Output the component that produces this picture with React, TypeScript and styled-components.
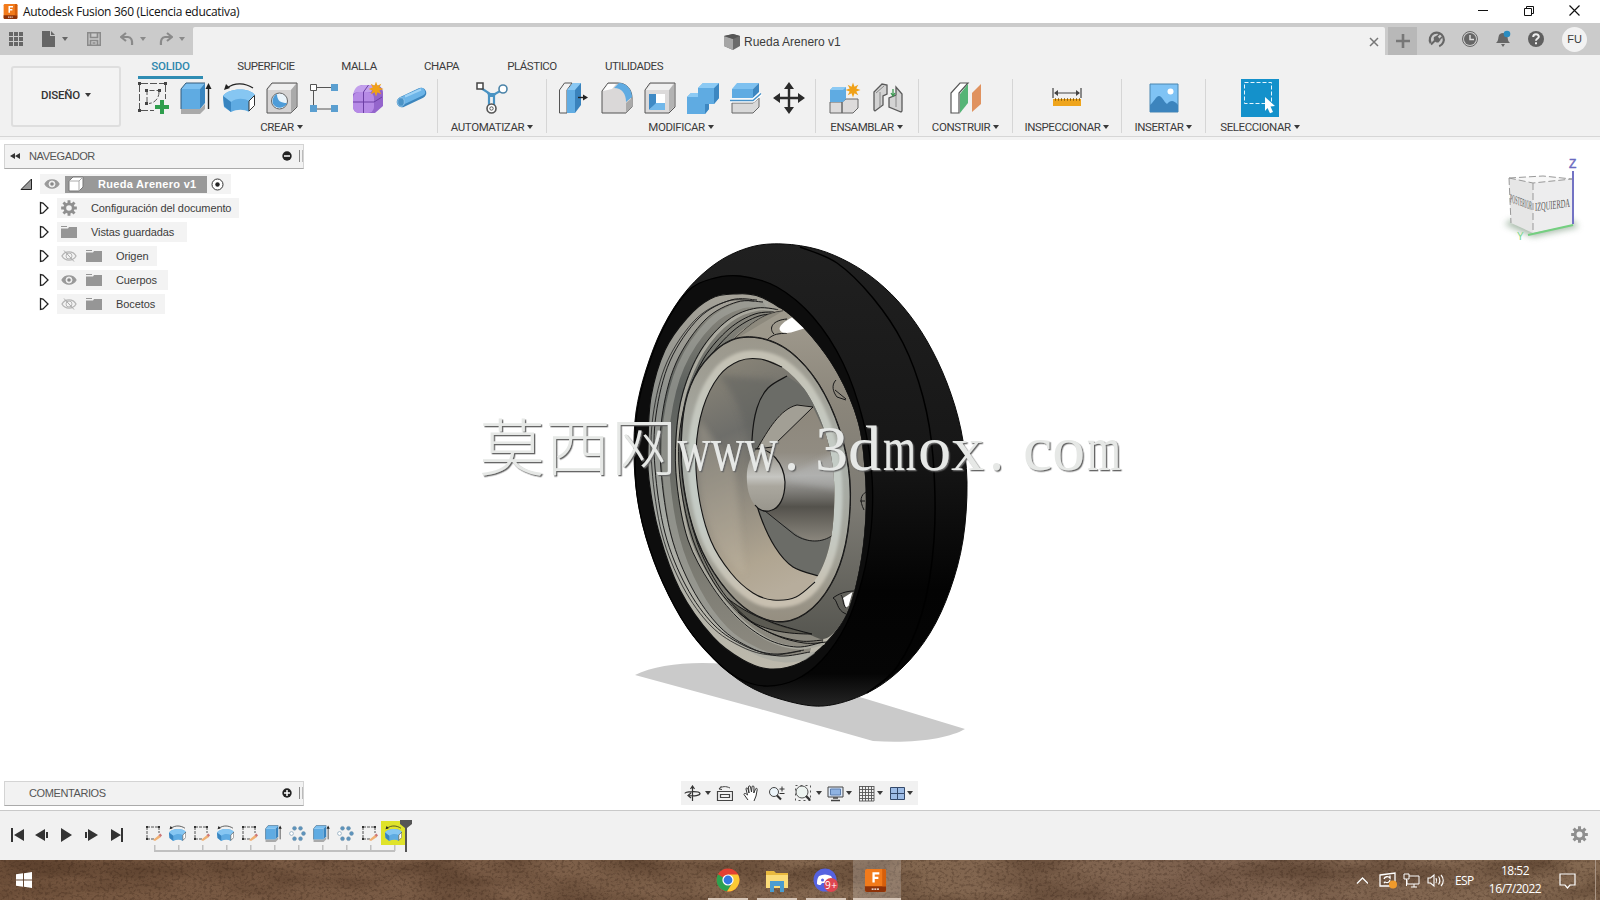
import React, { FC, ReactNode } from 'react';
import styled, { createGlobalStyle } from 'styled-components';

const GlobalStyle = createGlobalStyle`
  * {
    box-sizing: border-box;
  }
  body {
    margin: 0;
    overflow: hidden;
    background: #fff;
    font-family: 'Liberation Sans', Arial, sans-serif;
    color: #3c3c3c;
  }
  svg {
    display: block;
    flex: none;
  }
`;

const Window = styled.div`
  width: 1600px;
  height: 900px;
  display: flex;
  flex-direction: column;
  overflow: hidden;
`;

/* ---------- title bar ---------- */

const TitleBar = styled.header`
  height: 23px;
  flex: none;
  display: flex;
  align-items: center;
  padding: 0 18px 0 3px;
  background: #fff;
`;

const WindowTitle = styled.span`
  font-family: 'Open Sans', sans-serif;
  font-size: 12px;
  letter-spacing: -0.29px;
  color: #111;
  margin-left: 5px;
  flex: 1;
  white-space: nowrap;
`;

const WindowButtons = styled.div`
  display: flex;
  gap: 31px;
  padding-bottom: 3px;
`;

/* ---------- document strip ---------- */

const DocStrip = styled.div`
  height: 32px;
  flex: none;
  display: flex;
  align-items: flex-end;
  background: #cbcbcb;
`;

const QuickAccess = styled.div`
  width: 193px;
  height: 32px;
  display: flex;
  align-items: center;
  padding-left: 9px;
`;

const Slot = styled.div<{ $w: number; $dim?: boolean }>`
  width: ${({ $w }) => $w}px;
  flex: none;
  opacity: ${({ $dim }) => ($dim ? 0.55 : 1)};
`;

const DocTab = styled.div`
  width: 1192px;
  height: 28px;
  display: flex;
  align-items: center;
  padding: 1px 5px 0 531px;
  background: #f1f1f1;
  border-radius: 2px 2px 0 0;
  font-size: 12px;
`;

const DocName = styled.span`
  flex: 1;
  margin-left: 4px;
`;

const AddTab = styled.div`
  width: 29px;
  height: 28px;
  margin: 0 11px 0 3px;
  background: #b8b8b8;
  display: flex;
  align-items: center;
  justify-content: center;
`;

const AccountIcons = styled.div`
  height: 32px;
  display: flex;
  align-items: center;
  gap: 15px;
`;

const Avatar = styled.div`
  width: 25px;
  height: 25px;
  margin-left: 2px;
  border-radius: 50%;
  background: #f2f2f2;
  font-size: 11px;
  display: flex;
  align-items: center;
  justify-content: center;
`;

/* ---------- ribbon ---------- */

const Ribbon = styled.section`
  height: 85px;
  flex: none;
  display: flex;
  background: #f1f1f1;
  border-bottom: 3px solid #f3f3f3;
  box-shadow: inset 0 -1px 0 #d6d6d6;
  font-family: Roboto, sans-serif;
  font-size: 11.5px;
`;

const WorkspaceButton = styled.button`
  width: 110px;
  height: 61px;
  margin: 11px 0 0 11px;
  border: 2px solid #dedede;
  border-radius: 3px;
  background: #f3f3f3;
  font: 500 11.5px Roboto, sans-serif;
  letter-spacing: -0.2px;
  color: #333;
  display: flex;
  align-items: center;
  justify-content: center;
  gap: 5px;
  padding: 0 0 4px;
`;

const RibbonMain = styled.div`
  flex: 1;
  margin-left: 9px;
`;

const RibbonTabs = styled.nav`
  height: 24px;
  display: flex;
  padding-left: 8px;
`;

const RibbonTab = styled.div<{ $w: number; $active?: boolean }>`
  width: ${({ $w }) => $w}px;
  height: 24px;
  flex: none;
  text-align: center;
  line-height: 22px;
  letter-spacing: ${({ $active }) => ($active ? '-0.2px' : '-0.45px')};
  white-space: nowrap;
  font-weight: ${({ $active }) => ($active ? 500 : 400)};
  color: ${({ $active }) => ($active ? '#2f88ad' : '#3c3c3c')};
  border-bottom: 3px solid ${({ $active }) => ($active ? '#2f8db3' : 'transparent')};
`;

const Groups = styled.div`
  display: flex;
`;

const Group = styled.div<{ $w: number; $shift?: number; $last?: boolean }>`
  width: ${({ $w }) => $w}px;
  height: 54px;
  display: flex;
  flex-direction: column;
  align-items: center;
  padding-right: ${({ $shift }) => $shift || 0}px;
  border-right: 1px solid ${({ $last }) => ($last ? 'transparent' : '#d6d6d6')};
`;

const GroupIcons = styled.div`
  height: 38px;
  flex: none;
  display: flex;
  align-items: center;
  justify-content: center;
  gap: 11px;
`;

const GroupLabel = styled.div`
  display: flex;
  align-items: center;
  gap: 3px;
  padding-top: 2px;
  line-height: 16px;
  letter-spacing: -0.42px;
  white-space: nowrap;
`;

/* ---------- viewport ---------- */

const Viewport = styled.main`
  position: relative;
  height: 671px;
  flex: none;
  display: flex;
  flex-direction: column;
  padding: 4px 0 4px 4px;
  background: #fff;
  border-bottom: 1px solid #c9c9c9;
`;

const Scene = styled.svg`
  position: absolute;
  left: 0;
  top: 0;
`;

const PanelBar = styled.div`
  width: 300px;
  height: 25px;
  display: flex;
  align-items: center;
  padding: 0 0 1px 4px;
  border: 1px solid #d4d4d4;
  border-bottom: 1px solid #aaa;
  background: #f2f2f2;
  font-size: 11px;
  letter-spacing: -0.4px;
  color: #555;
`;

const PanelTitle = styled.span`
  flex: 1;
  margin-left: 8px;
`;

const PanelGrip = styled.i`
  width: 4px;
  height: 12px;
  margin-left: 7px;
  border-left: 1px solid #888;
  border-right: 1px solid #bbb;
`;

const Tree = styled.div`
  flex: 1;
  padding-top: 3px;
`;

const TreeRow = styled.div<{ $root?: boolean }>`
  height: 24px;
  display: flex;
  align-items: center;
  padding-left: ${({ $root }) => ($root ? 16 : 35)}px;
`;

const TreeItem = styled.div<{ $w: number }>`
  width: ${({ $w }) => $w}px;
  height: 20px;
  margin-left: 8px;
  padding-left: 4px;
  display: flex;
  align-items: center;
  gap: 9px;
  background: #f3f3f3;
  font-size: 11px;
  letter-spacing: -0.1px;
  white-space: nowrap;
`;

const TreeLabel = styled.span`
  margin-left: 5px;
`;

const RootName = styled.div`
  width: 142px;
  height: 17px;
  margin: 0 -5px 0 -4px;
  padding-left: 3px;
  display: flex;
  align-items: center;
  gap: 14px;
  background: #999;
  color: #fff;
  font-weight: bold;
  font-size: 11px;
  letter-spacing: 0.3px;
`;

const BottomBars = styled.div`
  position: relative;
  height: 25px;
  display: flex;
`;

const ViewTools = styled.div`
  height: 24px;
  margin-left: 377px;
  padding: 0 5px 0 3px;
  display: flex;
  align-items: center;
  background: #f1f1f1;
`;

/* ---------- timeline ---------- */

const Timeline = styled.footer`
  height: 49px;
  flex: none;
  display: flex;
  background: #f1f1f1;
  padding: 0 12px 0 9px;
`;

const Transport = styled.div`
  width: 132px;
  height: 48px;
  display: flex;
  align-items: center;
  gap: 9px;
`;

const Track = styled.div`
  position: relative;
  display: flex;
  height: 41px;
  padding-top: 10px;
`;

const Feature = styled.div<{ $active?: boolean }>`
  width: 24px;
  height: 24px;
  display: flex;
  align-items: center;
  justify-content: center;
  background: ${({ $active }) => ($active ? '#dfe32b' : 'none')};
`;

const Ruler = styled.svg`
  position: absolute;
  left: 1px;
  top: 8px;
`;

const TimelineSettings = styled.div`
  margin: 15px 0 0 auto;
`;

/* ---------- taskbar ---------- */

const TaskBar = styled.div`
  position: relative;
  height: 40px;
  flex: none;
  display: flex;
  background: linear-gradient(90deg, #75563f, #7b5d47 30%, #83674f 55%, #7f6350 75%, #846951);
  font-family: 'Open Sans', sans-serif;
  color: #fff;
`;

const Grain = styled.svg`
  position: absolute;
  left: 0;
  top: 0;
`;

const StartButton = styled.div`
  position: relative;
  width: 706px;
  padding: 12px 0 0 16px;
`;

const TaskApp = styled.div<{ $active?: boolean }>`
  position: relative;
  width: ${({ $active }) => ($active ? 48 : 49)}px;
  display: flex;
  align-items: center;
  justify-content: center;
  padding-right: ${({ $active }) => ($active ? 3 : 6)}px;
  background: ${({ $active }) => ($active ? 'rgba(255, 255, 255, 0.2)' : 'none')};
  &::after {
    content: '';
    position: absolute;
    left: ${({ $active }) => ($active ? 0 : 2)}px;
    right: ${({ $active }) => ($active ? 0 : 7)}px;
    bottom: 0;
    height: 2px;
    background: #d8c8ba;
  }
`;

const Tray = styled.div`
  position: relative;
  margin-left: auto;
  display: flex;
  align-items: center;
  border-right: 1px solid #a89484;
  margin-right: 4px;
`;

const Lang = styled.span`
  width: 50px;
  padding-left: 11px;
  font-size: 12px;
  letter-spacing: -0.6px;
`;

const Clock = styled.div`
  width: 60px;
  margin: 0 14px 0 -9px;
  text-align: center;
  font-size: 12px;
  line-height: 18px;
  letter-spacing: -0.5px;
`;

/* ---------- icons ---------- */

const Icon: FC<{ w: number; h?: number; box?: string; children: ReactNode }> = ({ w, h, box, children }) => (
  <svg width={w} height={h || w} viewBox={box || `0 0 ${w} ${h || w}`} fill="none">
    {children}
  </svg>
);

const Caret: FC<{ color?: string }> = ({ color = '#3a3a3a' }) => (
  <Icon w={6} h={4}>
    <path d="M0 0h6L3 4z" fill={color} />
  </Icon>
);

const FusionLogo: FC<{ size: number }> = ({ size }) => (
  <Icon w={size} box="0 0 24 24">
    <rect x="1" y="0" width="22" height="24" rx="2" fill="#f27a1a" />
    <path d="M1 18h22v4a2 2 0 0 1-2 2H3a2 2 0 0 1-2-2z" fill="#8e3208" />
    <path d="M19 0h2a2 2 0 0 1 2 2v16h-4z" fill="#d65f0b" />
    <path d="M10 14V4.500h6M10 9.300h5" stroke="#fff" strokeWidth="2.400" />
    <path d="M8 21h8" stroke="#fff" strokeWidth="1.500" strokeDasharray="2 .8" />
  </Icon>
);

const Star = ({ x, y }: { x: number; y: number }) => (
  <path
    transform={`translate(${x} ${y})`}
    d="M0-7.500 1.500-3.200 5.300-5.300 3.300-1.500 7.500 0 3.300 1.500 5.300 5.300 1.500 3.200 0 7.500-1.500 3.200-5.300 5.300-3.300 1.500-7.500 0-3.300-1.500-5.300-5.300-1.500-3.200z"
    fill="#f0a117"
  />
);

const SketchIcon = () => (
  <Icon w={32}>
    <path d="M4 1.500h24M2.500 3v24M28.500 3v14M4 28.500h13" stroke="#555" strokeDasharray="7 2" />
    <path d="M10 20V8.500h12M22 10c0 6-4 11-10 11.500" stroke="#555" strokeDasharray="5 2" />
    <path d="M1 0h3v3H1zM27 0h3v3h-3zM1 27h3v3H1zM8 7h3v3H8zM21 7h3v3h-3zM8 20h3v3H8z" fill="#444" />
    <path d="M23 18h4v5h5v4h-5v5h-4v-5h-5v-4h5z" fill="#2f9e4d" />
  </Icon>
);

const ExtrudeIcon: FC<{ size?: number }> = ({ size = 32 }) => (
  <Icon w={size} box="0 0 32 32">
    <path d="M1 27h19l5-5v5l-5 5H1z" fill="#aaa" />
    <path d="M1 7h19v20H1z" fill="#5fabe2" />
    <path d="M1 7 6 1h19l-5 6z" fill="#7cc0f0" />
    <path d="M20 7l5-6v20l-5 6z" fill="#3985c0" />
    <path d="M1 27V7l5-6h19" stroke="#345b7a" />
    <path d="M28.500 27V4" stroke="#222" strokeWidth="1.400" />
    <path d="M25.500 7l3-6 3 6z" fill="#222" />
  </Icon>
);

const RevolveIcon: FC<{ size?: number }> = ({ size = 32 }) => (
  <Icon w={size} box="0 0 32 32">
    <path d="M0 14c5-8 26-9 32-1l-6 6v11c-5-3-12-3-18 0l-7-5z" fill="#5fabe2" />
    <path d="M0 14c5-8 26-9 32-1l-6 6c-5-3-13-3-18 1z" fill="#86c6f2" />
    <path d="M8 20v10l-7-6-1-10z" fill="#3985c0" />
    <path d="M26 19l5.500-5.500v10L26 29z" fill="#fff" stroke="#333" />
    <path d="M4 6C12 0 22 1 30 6" stroke="#222" strokeWidth="1.300" />
    <path d="M1 8l2-6 4 4z" fill="#222" />
  </Icon>
);

const HoleIcon = () => (
  <Icon w={32}>
    <path d="M1 7 6 1h25v24l-6 6H1z" fill="#d5d3d3" stroke="#555" />
    <path d="M2 8 6.500 2H30l-5 6z" fill="#efefef" />
    <path d="M25 8l5-6v23l-5 6z" fill="#aaa" />
    <circle cx="13.500" cy="19" r="8" fill="#eaf4fb" stroke="#666" />
    <path d="M11 12c0 7 4 9 10 9a8 8 0 0 1-14 1c-1-4 0-8 4-10z" fill="#4e9cd8" />
  </Icon>
);

const PatternIcon = () => (
  <Icon w={32}>
    <path d="M8 5.500h14M4.500 9v15M8 27h14" stroke="#555" />
    <path d="M1.500 2.500h6v6h-6z" fill="#fff" stroke="#555" />
    <path d="M22 2h7v7h-7zM1 23h7v7H1zM22 23h7v7h-7z" fill="#5b9fd0" />
  </Icon>
);

const FormIcon = () => (
  <Icon w={32}>
    <path d="M1 12 9 3h14c5 0 8 3 8 8v13l-8 7H8c-5 0-7-3-7-7z" fill="#9465cc" />
    <rect x="1" y="10" width="21" height="21" rx="6" fill="#b68ae6" />
    <path d="M1 12C3 6 5 3 11 3h12l-4 7H7c-3 0-5 1-6 2z" fill="#c3a0ec" />
    <path d="M11.500 10v21M1 20h21l8-5M11.500 10l5-7" stroke="#6c3fa5" />
    <Star x={24} y={7} />
  </Icon>
);

const PipeIcon = () => (
  <Icon w={32}>
    <path d="M7 20 26 11" stroke="#3d86bd" strokeWidth="10.500" strokeLinecap="round" />
    <path d="M7 19 26 10" stroke="#6db5e8" strokeWidth="8" strokeLinecap="round" />
    <path d="M10 14.500l16-7" stroke="#9fd3f6" strokeWidth="2" />
    <ellipse cx="6" cy="20" rx="3.300" ry="4.300" fill="#4b93c6" stroke="#8fc4ea" />
  </Icon>
);

const AutomateIcon = () => (
  <Icon w={32}>
    <path d="M5 6l9 6h5l7-4M13 12v12M18 12v12" stroke="#4a93c3" strokeWidth="2.200" />
    <path d="M11 11h10l-3 4h-5z" fill="#4a93c3" />
    <path d="M1 1h6v6H1z" fill="#fff" stroke="#444" strokeWidth="1.500" />
    <circle cx="27" cy="7" r="4" fill="#fff" stroke="#4a83a8" strokeWidth="1.600" />
    <circle cx="15.500" cy="26.500" r="4.500" fill="#fff" stroke="#555" strokeWidth="1.600" />
    <circle cx="15.500" cy="26.500" r="1.700" stroke="#555" />
  </Icon>
);

const PressPullIcon = () => (
  <Icon w={32}>
    <path d="M1.500 31V8l5-7H14l-5 7v23z" fill="#f2f2f2" stroke="#555" />
    <path d="M9 31V8l6-7h8v22l-6 8z" fill="#3a83bd" />
    <path d="M9 8h8v23H9z" fill="#62ade3" />
    <path d="M9 8l6-7h8l-6 7z" fill="#8ac8f3" />
    <path d="M20 15.500h7" stroke="#222" strokeWidth="1.400" />
    <path d="M25 12.500l5 3-5 3z" fill="#222" />
  </Icon>
);

const FilletIcon = () => (
  <Icon w={32}>
    <path d="M1 31V9l6-8h10c9 0 14 7 14 15v9l-6 6z" fill="#dad8d8" stroke="#555" />
    <path d="M25 31V21l6-5v9z" fill="#aaa" />
    <path d="M13 6l5-5c8 0 13 7 13 14l-6 5C25 12 21 6 13 6z" fill="#5fabe2" />
    <path d="M2 9l5-7h8l-4 5z" fill="#fff" />
  </Icon>
);

const ShellIcon = () => (
  <Icon w={32}>
    <path d="M1 8 6 1h25v24l-6 6H1z" fill="#dcdada" stroke="#555" />
    <path d="M25 8l5-6v23l-5 5z" fill="#b3b3b3" />
    <path d="M2 8l5-6h22l-4 6z" fill="#f0f0f0" />
    <path d="M5 12h16v16H5z" fill="#fff" />
    <path d="M5 12h7v10l-7 6z" fill="#3f8ac5" />
    <path d="M5 28l7-7h9v7z" fill="#72b8ea" />
  </Icon>
);

const CombineIcon = () => (
  <Icon w={32}>
    <path d="M0 15l4-4h7V6l5-5h16v15l-5 6h-5v5l-4 5H0z" fill="#5fabe2" />
    <path d="M27 6l5-5v15l-5 6h-5v5l-4 5V22h9z" fill="#3d87c1" />
    <path d="M0 15l4-4h7v4zM11 6l5-5h16l-5 5z" fill="#8ccaf4" />
  </Icon>
);

const SplitIcon = () => (
  <Icon w={32}>
    <path d="M2 21h21l6-5v9l-6 6H2z" fill="#d9d9d9" stroke="#666" />
    <path d="M2 7h21v9H2z" fill="#5fabe2" />
    <path d="M2 7l5-6h22l-6 6z" fill="#7ec1f0" />
    <path d="M23 7l6-6v9l-6 6z" fill="#3d87c1" />
    <path d="M0 18.500h23l8-7" stroke="#fff" strokeWidth="4" />
    <path d="M0 18.500h23l8-7" stroke="#4591c8" strokeWidth="1.400" />
  </Icon>
);

const MoveIcon = () => (
  <Icon w={32}>
    <path d="M16 5v22M5 16h22" stroke="#2b2b2b" strokeWidth="2.400" />
    <path d="M16 0l5 7H11zM16 32l5-7H11zM0 16l7-5v10zM32 16l-7-5v10z" fill="#2b2b2b" />
  </Icon>
);

const ComponentIcon = () => (
  <Icon w={32}>
    <path d="M1 20h12v11H1zM13 20l4-3h12v9l-5 5H13z" fill="#dddbdb" stroke="#666" />
    <path d="M1 8l3-3h13v12l-3 3H1z" fill="#5fabe2" />
    <path d="M1 8l3-3h13l-3 3z" fill="#8ccaf4" />
    <Star x={24} y={8} />
  </Icon>
);

const JointIcon = () => (
  <Icon w={32}>
    <path d="M2 10l8-8 5 1v9l-4 2v9l-8 6-1-1zM30 29V12l-6-7v8l-7 3v9l12 5z" fill="#d3d3d3" stroke="#5a5a5a" strokeWidth="1.300" />
    <path d="M4 11l8-7M8 10v15M24 14v11" stroke="#8a8a8a" />
    <path d="M21 7v6M19 11l2 3 2-3" stroke="#3d9a53" strokeWidth="1.300" />
  </Icon>
);

const PlaneIcon = () => (
  <Icon w={32}>
    <path d="M1 31V11l9-10h8L9 11v20z" fill="#fff" stroke="#555" strokeWidth="1.200" />
    <path d="M10 12l8-10v19l-8 10z" fill="#55b476" />
    <path d="M22 11l9-9v20l-9 8z" fill="#e0925f" />
  </Icon>
);

const MeasureIcon = () => (
  <Icon w={30} h={20}>
    <path d="M1 0v10M29 0v10M3 5h24" stroke="#444" strokeWidth="1.200" />
    <path d="M2 5l4-3v6zM28 5l-4-3v6z" fill="#444" />
    <path d="M1 11h28v7H1z" fill="#efa51c" />
    <path d="M3 11.500h25" stroke="#875c0c" strokeWidth="2.500" strokeDasharray="1 2" />
  </Icon>
);

const PictureIcon = () => (
  <Icon w={30}>
    <path d="M1 1h28v28H1z" fill="#7fc3f5" stroke="#4a86b0" />
    <path d="M1 22c4-3 6-9 9-9s5 6 8 8c3-3 6-5 11 1v7H1z" fill="#3c84bd" />
    <circle cx="21.500" cy="8.500" r="3" fill="#fff" />
  </Icon>
);

const SelectIcon = () => (
  <Icon w={38}>
    <path d="M0 0h38v38H0z" fill="#1491cb" />
    <path d="M3.500 3.500h27v21h-27z" stroke="#e8f6ff" strokeDasharray="4 2" />
    <path d="M24 18l10 9-4.500.5 2.500 5.500-3 1.300-2.500-5.300-2.500 3z" fill="#fff" />
  </Icon>
);

const GearIcon: FC<{ size: number; color?: string }> = ({ size, color = '#8f8f8f' }) => (
  <Icon w={size} box="-10 -10 20 20">
    {[0, 45, 90, 135].map((a) => (
      <path key={a} d="M-1.800-9.800h3.600v5h-3.600zM-1.800 4.800h3.600v5h-3.600z" fill={color} transform={`rotate(${a})`} />
    ))}
    <circle r="5.200" stroke={color} strokeWidth="3.400" />
  </Icon>
);

const EyeIcon: FC<{ off?: boolean }> = ({ off }) => (
  <Icon w={16}>
    <path d="M1 8c3-5.500 11-5.500 14 0-3 5.500-11 5.500-14 0z" stroke={off ? '#b5b5b5' : '#999'} fill={off ? 'none' : '#999'} strokeWidth="1.300" />
    <circle cx="8" cy="8" r="3" fill={off ? 'none' : '#eee'} stroke={off ? '#b5b5b5' : '#eee'} />
    {!off && <circle cx="8" cy="8" r="1.800" fill="#888" />}
    {off && <path d="M3 2.500l10 11" stroke="#aaa" />}
  </Icon>
);

const FolderIcon = () => (
  <Icon w={16}>
    <path d="M0 3V2h6v1H0zM0 4.500h7l1-1.500h8v11H0z" fill="#969696" />
  </Icon>
);

const ExpandIcon = () => (
  <Icon w={10} h={14}>
    <path d="M1.500 1.500v11L4 12l5-5-5-5z" stroke="#222" strokeWidth="1.300" fill="#fff" />
  </Icon>
);

const MiniSketch = () => (
  <Icon w={17}>
    <path d="M2 2h12M2 2v12M14 2v6M2 14h7" stroke="#555" strokeDasharray="3 1" />
    <path d="M1 1h2v2H1zM13 1h2v2h-2zM1 13h2v2H1z" fill="#333" />
    <path d="M8 15l6-5 2 2-6 4z" fill="#f0b073" />
    <path d="M13.500 10l2-1.500 1.500 2-1.500 1.500z" fill="#c77" />
  </Icon>
);

const MiniPattern = () => (
  <Icon w={17}>
    {[0, 60, 120, 180, 240, 300].map((a) => (
      <circle
        key={a}
        cx={8.5 + 6 * Math.cos((a * Math.PI) / 180)}
        cy={8.5 + 6 * Math.sin((a * Math.PI) / 180)}
        r="1.900"
        fill={a === 180 ? '#fff' : '#5c93bd'}
        stroke="#7093ad"
        strokeWidth=".6"
      />
    ))}
  </Icon>
);

/* ---------- wheel ---------- */

type Pt = [number, number];

// Catmull-Rom spline through the points, as cubic beziers
const smooth = (pts: Pt[], closed = false) => {
  const n = pts.length;
  const at = (i: number) => (closed ? pts[(i + n) % n] : pts[Math.max(0, Math.min(n - 1, i))]);
  let d = `M${pts[0]}`;
  for (let i = 0; i < (closed ? n : n - 1); i++) {
    const [p0, p1, p2, p3] = [at(i - 1), at(i), at(i + 1), at(i + 2)];
    d += `C${p1[0] + (p2[0] - p0[0]) / 6},${p1[1] + (p2[1] - p0[1]) / 6} `;
    d += `${p2[0] - (p3[0] - p1[0]) / 6},${p2[1] - (p3[1] - p1[1]) / 6} ${p2}`;
  }
  return closed ? d + 'Z' : d;
};

const tire = smooth([
  [634, 455], [636, 412], [646, 370], [663, 327], [687, 290], [718, 262], [751, 247], [783, 244], [818, 249.500],
  [850, 263], [878, 282], [904, 308], [927, 341], [947, 383], [961, 430], [967, 482], [963, 540], [950, 590],
  [930, 633], [902, 668], [867, 693], [823, 706], [780, 699], [745, 684], [714, 659], [687, 627], [663, 583],
  [646, 537], [637, 495],
], true);

const sidewall = smooth([
  [635, 455], [637, 412], [647, 370], [664, 327], [687, 292], [711, 279], [740, 276], [777, 287], [813, 317],
  [843, 363], [863, 420], [872, 477], [871, 530], [862, 580], [846, 625], [822, 660], [795, 680], [765, 686],
  [738, 678], [714, 659], [687, 627], [663, 583], [646, 537], [637, 495],
], true);

const seam = smooth([
  [800, 247], [837, 263], [873, 298], [903, 343], [923, 397], [933, 457], [934, 540], [922, 613], [897, 667], [867, 693],
]);

const rim = smooth([
  [733, 294], [763, 298], [803, 327], [837, 373], [858, 423], [865, 477], [865, 523], [859, 570], [847, 613],
  [827, 642], [800, 663], [770, 669], [743, 660], [713, 637], [680, 590], [659, 533], [649, 480], [648, 447],
  [651, 397], [665, 350], [687, 318], [710, 299],
], true);

const band1 = smooth([
  [763, 302], [737, 302], [705, 320], [676, 363], [662, 417], [661, 470], [671, 535], [692, 588], [720, 627],
  [751, 648], [780, 656], [810, 652],
]);

const band2 = smooth([
  [785, 311], [757, 308], [728, 320], [701, 350], [683, 392], [676, 437], [677, 485], [688, 540], [710, 583],
  [737, 617], [767, 639], [797, 647], [823, 642],
]);

const band3 = smooth([
  [779, 312], [755, 314], [729, 329], [704, 358], [687, 397], [679, 440], [681, 487], [693, 540], [716, 586],
  [743, 616], [771, 633], [800, 641], [823, 640],
]);

const face = smooth([
  [731, 342], [748, 326], [775, 311], [785, 311], [812, 338], [837, 373], [858, 423], [865, 477], [865, 523], [859, 570],
  [847, 613], [827, 638], [805, 633], [762, 618], [720, 575], [695, 500], [700, 390],
], true);

const ringOuter = smooth([
  [731, 340], [761, 338], [791, 352], [819, 384], [840, 430], [850, 480], [848, 532], [836, 575], [813, 608],
  [783, 622], [750, 612], [720, 582], [697, 540], [684, 490], [681, 440], [687, 395], [704, 362],
], true);

const bowlLeft: Pt[] = [
  [773, 600], [753, 593], [731, 573], [711, 541], [699, 497], [696, 450], [703, 408], [719, 376], [739, 361], [760, 359], [782, 367],
];

const bowl = smooth([
  ...bowlLeft, [807, 393], [826, 435], [834, 480], [832, 532], [821, 570], [801, 594],
], true);

const backPlate = smooth([
  [787, 376], [768, 388], [757, 408], [752, 440], [753, 485], [760, 515], [775, 547], [793, 567], [819, 576],
]);

const cone: string =
  smooth([[757, 449], [768, 430], [783, 412], [797, 405], [813, 407]]) +
  'L827 437L835 477L833 535C822 543 808 543 795 533L765 511Z';

const WheelScene = () => (
  <Scene width="1600" height="671" viewBox="0 140 1600 671" fill="none">
    <defs>
      <linearGradient id="tread" x1="0" y1="0" x2="0" y2="1">
        <stop offset="0" stopColor="#202020" />
        <stop offset=".45" stopColor="#171717" />
        <stop offset=".75" stopColor="#030303" />
        <stop offset=".93" stopColor="#050505" />
        <stop offset="1" stopColor="#252525" />
      </linearGradient>
      <linearGradient id="barrel" x1="0" y1="0" x2="0" y2="1">
        <stop offset="0" stopColor="#a5a298" />
        <stop offset=".3" stopColor="#8d908c" />
        <stop offset=".6" stopColor="#a7aaa4" />
        <stop offset="1" stopColor="#bdb9ac" />
      </linearGradient>
      <linearGradient id="deep" x1="0" y1="0" x2="0" y2="1">
        <stop offset="0" stopColor="#8b897f" />
        <stop offset=".25" stopColor="#5c605d" />
        <stop offset=".7" stopColor="#77776f" />
        <stop offset="1" stopColor="#8d8a80" />
      </linearGradient>
      <linearGradient id="disc" x1="0" y1="0" x2="0" y2="1">
        <stop offset="0" stopColor="#a29c8f" />
        <stop offset=".3" stopColor="#8a857a" />
        <stop offset=".6" stopColor="#7c7a73" />
        <stop offset="1" stopColor="#565650" />
      </linearGradient>
      <linearGradient id="ring" x1="0" y1="0" x2="0" y2="1">
        <stop offset="0" stopColor="#9b978b" />
        <stop offset=".45" stopColor="#a9aea8" />
        <stop offset=".75" stopColor="#a4a49a" />
        <stop offset="1" stopColor="#958e80" />
      </linearGradient>
      <linearGradient id="ringLight" x1="0" y1="0" x2="0" y2="1">
        <stop offset="0" stopColor="#c4c1b4" />
        <stop offset=".4" stopColor="#c4ccc6" />
        <stop offset=".7" stopColor="#c4cac4" />
        <stop offset="1" stopColor="#c8c0b0" />
      </linearGradient>
      <linearGradient id="bowl" x1=".2" y1="0" x2=".45" y2="1">
        <stop offset="0" stopColor="#8a8578" />
        <stop offset=".3" stopColor="#6e6e6a" />
        <stop offset=".55" stopColor="#8d887d" />
        <stop offset=".85" stopColor="#b0a591" />
        <stop offset="1" stopColor="#b7ad9c" />
      </linearGradient>
      <linearGradient id="cone" x1="0" y1="0" x2="0" y2="1">
        <stop offset="0" stopColor="#8d877b" />
        <stop offset=".35" stopColor="#918c82" />
        <stop offset=".52" stopColor="#aaa9a6" />
        <stop offset=".75" stopColor="#54524c" />
        <stop offset="1" stopColor="#8a867d" />
      </linearGradient>
      <linearGradient id="nose" x1="0" y1="0" x2="0" y2="1">
        <stop offset="0" stopColor="#8f8b80" />
        <stop offset=".45" stopColor="#c6c6c2" />
        <stop offset=".6" stopColor="#aaa79e" />
        <stop offset="1" stopColor="#98958c" />
      </linearGradient>
      <filter id="soft" x="-20%" y="-20%" width="140%" height="140%">
        <feGaussianBlur stdDeviation="3" />
      </filter>
      <filter id="softer" x="-20%" y="-20%" width="140%" height="140%">
        <feGaussianBlur stdDeviation="1.600" />
      </filter>
      <clipPath id="rimClip">
        <path d={rim} />
      </clipPath>
      <clipPath id="ringClip">
        <path d={ringOuter} />
      </clipPath>
      <clipPath id="bowlClip">
        <path d={bowl} />
      </clipPath>
    </defs>

    <path d="M635 675C655 665 690 661 725 664L863 698 965 729C950 738 915 744 873 741L760 709z" fill="#cacaca" />
    <path d={tire} fill="url(#tread)" stroke="#0a0a0a" />
    <path d={sidewall} fill="#0d0d0d" stroke="#000" strokeWidth="1.300" />
    <path d={seam} stroke="#000" strokeWidth="1.500" />

    <path d={rim} fill="url(#barrel)" stroke="#111" strokeWidth="1.200" />
    <g clipPath="url(#rimClip)">
      <path d={band1 + 'L860 470Z'} fill="url(#deep)" />
      <path d={band1} stroke="#a5a7a0" strokeWidth="7" transform="translate(5 3)" opacity=".6" />
      <path d={band2 + 'L860 470Z'} fill="url(#deep)" />
      <path d={band1} stroke="#1c1c1c" />
      <path d={band1} stroke="#1c1c1c" transform="translate(-6 -2)" />
      <path d={band1} stroke="#1c1c1c" transform="translate(-9 -1)" strokeWidth=".8" />
      <path d={band2} stroke="#aaa99f" strokeWidth="3" transform="translate(2 1)" />
      <path d={band2} stroke="#151515" />
      <path d={band3} stroke="#151515" />
      <path d={band3} stroke="#151515" transform="translate(4 2)" />
      <path d={face} fill="url(#disc)" />
      <path d="M731 342C748 326 762 313 783 311M727 598C745 612 763 622 812 634C790 634 760 632 738 612" stroke="#151515" fill="#252520" fillOpacity=".45" />
      <path d="M731 342C748 326 762 313 783 311l10 6-9 17-30 6z" fill="#9c988b" opacity=".7" />
      <path d="M767 340C774 333 779 334 787 333M787 319C773 320 768 328 774 334" stroke="#151515" />
    </g>
    <path d="M792 317.500C785 321 780 325 779.500 328.500C780 333 785 333.500 791 332.500L804 328.500z" fill="#fff" />
    <path d="M836 380c-5 5-3 12 1 17l9 3M835 390l11 9M866 492c-5 3-7 8-2 18M860 501h5" stroke="#1a1a1a" />
    <path d="M854 591C846 591 838 594 833 598C838 600 836 610 846 614M841 595c3 4 1 8 5 13" stroke="#151515" />
    <path d="M852.500 592L843 598C844.500 601 844 604 846 607.500L848.500 606z" fill="#fff" />

    <path d={ringOuter} fill="url(#ring)" stroke="#1a1a1a" />
    <g clipPath="url(#ringClip)">
      <path d={bowl} stroke="url(#ringLight)" strokeWidth="16" filter="url(#softer)" />
      <path d={ringOuter} stroke="#1a1a1a" strokeWidth="2" />
    </g>
    <path d={bowl} fill="url(#bowl)" />
    <g clipPath="url(#bowlClip)">
      <path d="M700 420C690 480 705 550 745 575L735 470z" fill="#c6bca9" opacity=".3" filter="url(#soft)" />
      <path d="M718 375C740 400 750 430 748 470L775 380z" fill="#5f605d" opacity=".5" filter="url(#soft)" />
      <path d={backPlate + 'L850 576L850 420Z'} fill="#6b6c67" />
      <path d={cone} fill="url(#cone)" />
      <path d="M757 449C768 430 780 409 797 405L813 407L772 447z" fill="#a29f95" stroke="#151515" />
      <path d={backPlate} stroke="#151515" strokeWidth="1.200" />
      <path d="M833 535C822 543 808 543 795 535L765 511" stroke="#1a1a1a" />
      <path d="M780 480L840 450 840 490z" fill="#b9bbbb" opacity=".45" filter="url(#soft)" />
    </g>
    <path d={smooth([[815, 582], [796, 597], ...bowlLeft])} stroke="#151515" strokeWidth="1.100" />
    <path d="M757 449C749 458 746 468 747 482C748 500 757 512 769 511C780 509 785 497 785 482C784 464 771 447 757 449z" fill="url(#nose)" />
    <path d="M755 449C771 447 784 464 785 482C785 497 780 509 769 511C763 512 758 509 755 505" stroke="#151515" strokeWidth="1.200" />
  </Scene>
);

const ViewCube = () => (
  <Scene width="1600" height="671" viewBox="0 140 1600 671" fill="none">
    <defs>
      <filter id="cubeBlur" x="-30%" y="-60%" width="160%" height="220%">
        <feGaussianBlur stdDeviation="3" />
      </filter>
    </defs>
    <path d="M1504 224l29 13 46-10-8-8h-58z" fill="#8fa893" opacity=".75" filter="url(#cubeBlur)" />
    <path d="M1509 178l34-2 29 3-39 4z" fill="#f7f7f7" />
    <path d="M1509 178l24 5v50l-22-10z" fill="#e6e6e6" />
    <path d="M1533 183l39-4v46l-39 8z" fill="#ededee" />
    <path d="M1509 178l34-2 29 3-39 4zM1533 183v50M1509 178l2 45" stroke="#999" strokeDasharray="7 3" />
    <path d="M1573 171v53" stroke="#7373c4" strokeWidth="2" />
    <path d="M1528 235l45-10" stroke="#74cf80" strokeWidth="2.200" />
    <g fontFamily="Liberation Serif, serif" fontSize="12" fill="#555">
      <text transform="matrix(1 -.12 0 1 1535 211)" textLength="35" lengthAdjust="spacingAndGlyphs">IZQUIERDA</text>
      <text transform="matrix(1 .36 0 1 1510 202)" textLength="22" lengthAdjust="spacingAndGlyphs">POSTERIOR</text>
    </g>
    <g fontFamily="Liberation Sans, sans-serif">
      <text x="1569" y="168" fontSize="12" fill="#6a6ac0" stroke="#6a6ac0" strokeWidth=".4">Z</text>
      <text x="1517" y="240" fontSize="10" fill="#7bd889">Y</text>
    </g>
  </Scene>
);

const watermark: { text: string; x: number; w: number; cjk?: boolean }[] = [
  { text: '莫西网', x: 479, w: 198, cjk: true },
  { text: 'www', x: 677, w: 101 },
  { text: '.', x: 784, w: 15 },
  { text: '3d', x: 815, w: 66 },
  { text: 'm', x: 883, w: 33 },
  { text: 'ox', x: 918, w: 66 },
  { text: '.', x: 989, w: 15 },
  { text: 'co', x: 1023, w: 62 },
  { text: 'm', x: 1087, w: 34 },
];

const WatermarkText = styled.text`
  font-family: 'Liberation Serif', serif;
  font-size: 64px;
  fill: #e6e8e6;
`;

const WatermarkRun = styled.tspan<{ $cjk?: boolean }>`
  font-family: ${({ $cjk }) => ($cjk ? "'Noto Sans CJK SC', sans-serif" : "'Liberation Serif', serif")};
  font-size: ${({ $cjk }) => ($cjk ? 62 : 64)}px;
  font-weight: 300;
`;

const Watermark = () => (
  <Scene width="1600" height="671" viewBox="0 140 1600 671">
    <filter id="emboss" x="-2%" y="-10%" width="104%" height="120%">
      <feDropShadow dx="1.300" dy="1.300" stdDeviation=".3" floodColor="#666" floodOpacity="1" />
    </filter>
    <WatermarkText filter="url(#emboss)">
      {watermark.map((run) => (
        <WatermarkRun
          key={run.x}
          $cjk={run.cjk}
          x={run.x}
          y={run.cjk ? 471 : 470}
          textLength={run.w}
          lengthAdjust="spacingAndGlyphs"
        >
          {run.text}
        </WatermarkRun>
      ))}
    </WatermarkText>
  </Scene>
);

/* ---------- data ---------- */

const tabs = [
  { name: 'SOLIDO', w: 65 },
  { name: 'SUPERFICIE', w: 126 },
  { name: 'MALLA', w: 60 },
  { name: 'CHAPA', w: 105 },
  { name: 'PLÁSTICO', w: 76 },
  { name: 'UTILIDADES', w: 128 },
];

const groups = [
  { name: 'CREAR', w: 308, shift: 4, icons: [SketchIcon, ExtrudeIcon, RevolveIcon, HoleIcon, PatternIcon, FormIcon, PipeIcon] },
  { name: 'AUTOMATIZAR', w: 109, icons: [AutomateIcon] },
  { name: 'MODIFICAR', w: 269, icons: [PressPullIcon, FilletIcon, ShellIcon, CombineIcon, SplitIcon, MoveIcon] },
  { name: 'ENSAMBLAR', w: 103, shift: 1, icons: [ComponentIcon, JointIcon] },
  { name: 'CONSTRUIR', w: 94, icons: [PlaneIcon] },
  { name: 'INSPECCIONAR', w: 109, icons: [MeasureIcon] },
  { name: 'INSERTAR', w: 84, icons: [PictureIcon] },
  { name: 'SELECCIONAR', w: 109, icons: [SelectIcon] },
];

const features = ['sketch', 'revolve', 'sketch', 'revolve', 'sketch', 'extrude', 'pattern', 'extrude', 'pattern', 'sketch', 'revolve'];

const folders = [
  { name: 'Origen', w: 100, off: true },
  { name: 'Cuerpos', w: 111, off: false },
  { name: 'Bocetos', w: 108, off: true },
];

const FeatureIcon: FC<{ kind: string }> = ({ kind }) => {
  if (kind === 'sketch') return <MiniSketch />;
  if (kind === 'revolve') return <RevolveIcon size={17} />;
  if (kind === 'extrude') return <ExtrudeIcon size={17} />;
  return <MiniPattern />;
};

const App: FC = () => {
  return (
    <Window>
      <GlobalStyle />
      <TitleBar>
        <FusionLogo size={15} />
        <WindowTitle>Autodesk Fusion 360 (Licencia educativa)</WindowTitle>
        <WindowButtons>
          <Icon w={15}><path d="M3 7.500h10" stroke="#111" /></Icon>
          <Icon w={15}><path d="M3.500 5.500h7v7h-7zM5.500 5V3.500h7v7H11" stroke="#111" /></Icon>
          <Icon w={15}><path d="M2.500 2.500l10 10M12.500 2.500l-10 10" stroke="#111" strokeWidth="1.200" /></Icon>
        </WindowButtons>
      </TitleBar>

      <DocStrip>
        <QuickAccess>
          <Slot $w={33}>
            <Icon w={14}>
              <path d="M0 0h4v4H0zM5 0h4v4H5zM10 0h4v4h-4zM0 5h4v4H0zM5 5h4v4H5zM10 5h4v4h-4zM0 10h4v4H0zM5 10h4v4H5zM10 10h4v4h-4z" fill="#666" />
            </Icon>
          </Slot>
          <Slot $w={20}>
            <Icon w={13} h={16}><path d="M0 0h8v5h5v11H0zM9 0l4 4H9z" fill="#666" /></Icon>
          </Slot>
          <Slot $w={25}><Caret color="#666" /></Slot>
          <Slot $w={33} $dim>
            <Icon w={14}>
              <path d="M.7.7h12.600v12.600H.7zM3.500 1v4.500h7V1M3.500 13V8.500h7V13M5.500 11h3" stroke="#555" strokeWidth="1.700" />
            </Icon>
          </Slot>
          <Slot $w={20} $dim>
            <Icon w={14}><path d="M6 1L1 5l5 4M1.500 5H8c3 0 4.500 3 4 8" stroke="#555" strokeWidth="2.200" /></Icon>
          </Slot>
          <Slot $w={19} $dim><Caret color="#555" /></Slot>
          <Slot $w={20} $dim>
            <Icon w={14}><path d="M8 1l5 4-5 4M12.500 5H6C3 5 1.500 8 2 13" stroke="#555" strokeWidth="2.200" /></Icon>
          </Slot>
          <Slot $w={10} $dim><Caret color="#555" /></Slot>
        </QuickAccess>
        <DocTab>
          <Icon w={16}>
            <path d="M0 2l9-2 7 2v10l-7 4-9-4z" fill="#6b6b6b" />
            <path d="M0 2l9 3v11l-9-4z" fill="#a6a6a6" />
            <path d="M0 2l9-2 7 2-7 3z" fill="#555" />
          </Icon>
          <DocName>Rueda Arenero v1</DocName>
          <Icon w={12}><path d="M2 2l8 8M10 2l-8 8" stroke="#777" strokeWidth="1.500" /></Icon>
        </DocTab>
        <AddTab>
          <Icon w={14}><path d="M7 0v14M0 7h14" stroke="#777" strokeWidth="2.600" /></Icon>
        </AddTab>
        <AccountIcons>
          <Icon w={18}>
            <path d="M4.500 15A7 7 0 1 1 13.500 15" stroke="#666" strokeWidth="2.200" transform="rotate(20 9 9)" />
            <path d="M3 14.500l4-4" stroke="#666" strokeWidth="2" />
            <path d="M6 7l3-1.500 3.500 4.500-2 2.500C7 13 5 10 6 7z" fill="#666" />
            <path d="M9 6.500l2.500-2.500M11.500 9.500L14 7" stroke="#666" strokeWidth="1.500" />
          </Icon>
          <Icon w={18}>
            <circle cx="9" cy="9" r="7.500" stroke="#666" />
            <circle cx="9" cy="9" r="6" fill="#666" />
            <path d="M9 5v4.500h4" stroke="#ddd" strokeWidth="1.500" />
          </Icon>
          <Icon w={18}>
            <path d="M2 13c2-2 2-3 2.500-6 .5-3 2-4 4.500-4s4 1 4.500 4c.5 3 .5 4 2.500 6zM7 14h4l-2 3z" fill="#666" />
            <circle cx="13" cy="4" r="3.300" fill="#2a8cc0" />
          </Icon>
          <Icon w={18}>
            <circle cx="9" cy="9" r="8" fill="#5f5f5f" />
            <path d="M6.200 7c0-3.600 5.600-3.600 5.600-.3C11.800 8.600 9 8.500 9 10.800M9 12.300v2" stroke="#eee" strokeWidth="2" />
          </Icon>
          <Avatar>FU</Avatar>
        </AccountIcons>
      </DocStrip>

      <Ribbon>
        <WorkspaceButton>
          DISEÑO <Caret />
        </WorkspaceButton>
        <RibbonMain>
          <RibbonTabs>
            {tabs.map((tab, index) => (
              <RibbonTab key={tab.name} $w={tab.w} $active={index === 0}>
                {tab.name}
              </RibbonTab>
            ))}
          </RibbonTabs>
          <Groups>
            {groups.map((group, index) => (
              <Group key={group.name} $w={group.w} $shift={group.shift} $last={index === groups.length - 1}>
                <GroupIcons>
                  {group.icons.map((GroupIcon, i) => (
                    <GroupIcon key={i} />
                  ))}
                </GroupIcons>
                <GroupLabel>
                  {group.name} <Caret />
                </GroupLabel>
              </Group>
            ))}
          </Groups>
        </RibbonMain>
      </Ribbon>

      <Viewport>
        <WheelScene />
        <ViewCube />
        <Watermark />
        <PanelBar>
          <Icon w={12} h={8}><path d="M6 1v6L1 4zM11 1v6L6 4z" fill="#333" /></Icon>
          <PanelTitle>NAVEGADOR</PanelTitle>
          <Icon w={10}><circle cx="5" cy="5" r="4.700" fill="#222" /><path d="M2 5h6" stroke="#fff" strokeWidth="1.500" /></Icon>
          <PanelGrip />
        </PanelBar>
        <Tree>
          <TreeRow $root>
            <Icon w={12}><path d="M1 11.500L11.500 1v10.500z" fill="#999" stroke="#222" /></Icon>
            <TreeItem $w={191}>
              <EyeIcon />
              <RootName>
                <Icon w={16}>
                  <path d="M1 5l4-4h10v10l-4 4H1z" fill="#fff" stroke="#777" />
                  <path d="M1 5h10v10M11 5l4-4" stroke="#aaa" />
                </Icon>
                Rueda Arenero v1
              </RootName>
              <Icon w={13}>
                <circle cx="6.500" cy="6.500" r="5.500" stroke="#333" fill="#fff" />
                <circle cx="6.500" cy="6.500" r="2.200" fill="#222" />
              </Icon>
            </TreeItem>
          </TreeRow>
          <TreeRow>
            <ExpandIcon />
            <TreeItem $w={182}>
              <GearIcon size={16} />
              <TreeLabel>Configuración del documento</TreeLabel>
            </TreeItem>
          </TreeRow>
          <TreeRow>
            <ExpandIcon />
            <TreeItem $w={130}>
              <FolderIcon />
              <TreeLabel>Vistas guardadas</TreeLabel>
            </TreeItem>
          </TreeRow>
          {folders.map((folder) => (
            <TreeRow key={folder.name}>
              <ExpandIcon />
              <TreeItem $w={folder.w}>
                <EyeIcon off={folder.off} />
                <FolderIcon />
                <TreeLabel>{folder.name}</TreeLabel>
              </TreeItem>
            </TreeRow>
          ))}
        </Tree>
        <BottomBars>
          <PanelBar>
            <Icon w={12} h={8}>{null}</Icon>
            <PanelTitle>COMENTARIOS</PanelTitle>
            <Icon w={10}><circle cx="5" cy="5" r="4.700" fill="#222" /><path d="M2 5h6M5 2v6" stroke="#fff" strokeWidth="1.500" /></Icon>
            <PanelGrip />
          </PanelBar>
          <ViewTools>
            <Slot $w={21}>
              <Icon w={17}>
                <path d="M8.500 1v15M6.500 4l2-3 2 3M1 8.500c0-2 14-3 15 0 0 2-6 3-11 2M7 8l-3 2.500L7 13" stroke="#333" strokeWidth="1.200" />
              </Icon>
            </Slot>
            <Slot $w={11}><Caret /></Slot>
            <Slot $w={27}>
              <Icon w={17}>
                <path d="M1.500 6.500h15v9h-15zM4.500 9.500h9v3h-9z" stroke="#444" strokeWidth="1.200" />
                <path d="M3 4c3-3 7-3 11-1M5.500 1L3 4l3 .5" stroke="#444" />
              </Icon>
            </Slot>
            <Slot $w={25}>
              <Icon w={17}>
                <path d="M5 15L1 9.500c0-1.500 1.500-1.500 3.500.5L3 4c0-1.500 1.500-1.500 2 0l1 4-.5-6c0-1.500 2-1.500 2 0L8.500 7 9 2c0-1.500 2-1.300 2 0l-.2 6 1.700-4c.7-1.500 2-.5 1.700.7L13 11l-2 5" stroke="#333" fill="#fff" />
              </Icon>
            </Slot>
            <Slot $w={26}>
              <Icon w={17}>
                <circle cx="6" cy="7" r="4.500" stroke="#444" fill="#edf5fa" />
                <path d="M9 10.500l4 4" stroke="#333" strokeWidth="2.200" />
                <path d="M11.500 4h5M14 1.500v5M11.500 8.500h5" stroke="#333" />
              </Icon>
            </Slot>
            <Slot $w={22}>
              <Icon w={18}>
                <path d="M1.500 1.500h15v15h-15z" stroke="#555" strokeDasharray="2 3" />
                <circle cx="8" cy="8" r="6" stroke="#555" fill="#edf3f0" />
                <path d="M12 12l4 4" stroke="#333" strokeWidth="2.400" />
              </Icon>
            </Slot>
            <Slot $w={11}><Caret /></Slot>
            <Slot $w={19}>
              <Icon w={17}>
                <path d="M1 2h15v10H1z" fill="#dce8f8" stroke="#444" />
                <path d="M3.500 4h10v6h-10z" fill="#8fb3e2" stroke="#5c7fb0" />
                <path d="M6 13h5M4 15.500h9" stroke="#444" strokeWidth="1.300" />
              </Icon>
            </Slot>
            <Slot $w={12}><Caret /></Slot>
            <Slot $w={19}>
              <Icon w={17}>
                <path d="M1.500 1v15M4.500 1v15M7.500 1v15M10.500 1v15M13.500 1v15M16 1v15M1 1.500h15M1 4.500h15M1 7.500h15M1 10.500h15M1 13.500h15M1 16h15" stroke="#555" strokeWidth=".9" />
              </Icon>
            </Slot>
            <Slot $w={12}><Caret /></Slot>
            <Slot $w={18}>
              <Icon w={17}>
                <path d="M1.500 2.500h7v6h-7zM8.500 2.500h7v6h-7zM1.500 8.500h7v6h-7zM8.500 8.500h7v6h-7z" fill="#9dbce6" stroke="#33486a" />
              </Icon>
            </Slot>
            <Slot $w={6}><Caret /></Slot>
          </ViewTools>
        </BottomBars>
      </Viewport>

      <Timeline>
        <Transport>
          <Icon w={16}><path d="M2 1h2v14H2zM15 2v12L5 8z" fill="#333" /></Icon>
          <Icon w={16}><path d="M11 2v12L1 8zM12 5h2v6h-2z" fill="#333" /></Icon>
          <Icon w={16}><path d="M2 1v14l11-7z" fill="#333" /></Icon>
          <Icon w={16}><path d="M4 2v12l10-6zM1 5h2v6H1z" fill="#333" /></Icon>
          <Icon w={16}><path d="M12 1h2v14h-2zM2 2v12l10-6z" fill="#333" /></Icon>
        </Transport>
        <Track>
          {features.map((kind, index) => (
            <Feature key={index} $active={index === features.length - 1}>
              <FeatureIcon kind={kind} />
            </Feature>
          ))}
          <Ruler width="274" height="34" viewBox="0 0 274 34">
            {features.map((_, index) => (
              <rect key={index} x={12 + index * 24} y="26" width="1.500" height="6" fill="#c0c0c0" />
            ))}
            <rect x="12" y="31" width="241" height="2" fill="#c0c0c0" />
            <path d="M258 1h12v4l-5 4v24h-2V9l-5-4z" fill="#555" />
          </Ruler>
        </Track>
        <TimelineSettings>
          <GearIcon size={17} />
        </TimelineSettings>
      </Timeline>

      <TaskBar>
        <Grain width="1600" height="40">
          <filter id="mottle" x="0" y="0" width="100%" height="100%" colorInterpolationFilters="sRGB">
            <feTurbulence type="fractalNoise" baseFrequency=".012 .04" numOctaves="3" seed="5" />
            <feColorMatrix values="0 0 0 0 .25  0 0 0 0 .16  0 0 0 0 .1  2.200 0 0 0 -.8" />
          </filter>
          <filter id="speckle" x="0" y="0" width="100%" height="100%" colorInterpolationFilters="sRGB">
            <feTurbulence type="fractalNoise" baseFrequency=".31 .37" numOctaves="4" seed="8" />
            <feColorMatrix values="0 0 0 0 .16  0 0 0 0 .09  0 0 0 0 .05  4 0 0 0 -1.900" />
          </filter>
          <rect width="1600" height="40" filter="url(#mottle)" opacity=".4" />
          <rect width="1600" height="40" filter="url(#speckle)" opacity=".24" />
        </Grain>
        <StartButton>
          <Icon w={16}><path d="M0 2.300l7-1V7.600H0zM8 1.200L16 0v7.600H8zM0 8.500h7v6.300l-7-1zM8 8.500h8V16l-8-1.200z" fill="#fff" /></Icon>
        </StartButton>
        <TaskApp>
          <Icon w={24}>
            <circle cx="12" cy="12" r="11.500" fill="#e34133" />
            <path d="M2 6.300A11.500 11.500 0 0 0 11 23.500L17 14l-5-1z" fill="#2da14f" />
            <path d="M12 6.500h10A11.500 11.500 0 0 1 11 23.500l6-9.500z" fill="#fcc934" />
            <circle cx="12" cy="12" r="5.600" fill="#fff" />
            <circle cx="12" cy="12" r="4.400" fill="#3478e0" />
          </Icon>
        </TaskApp>
        <TaskApp>
          <Icon w={24}>
            <path d="M1 3h8l2 2h12v15H1z" fill="#e9b93f" />
            <path d="M1 7h22v13H1z" fill="#fbdc79" />
            <path d="M5 13h14v11h-4v-6H9v6H5z" fill="#4a9cd0" />
          </Icon>
        </TaskApp>
        <TaskApp>
          <Icon w={25}>
            <circle cx="12" cy="12" r="11.500" fill="#5562e0" />
            <path d="M6 8c4-2 8-2 12 0 2 3 2 6 2 8-3 2-4 1-5-1H9c-1 2-2 3-5 1 0-3 0-5 2-8z" fill="#fff" />
            <circle cx="9.500" cy="12" r="1.500" fill="#5562e0" />
            <circle cx="18" cy="17" r="7" fill="#df4550" />
            <text x="12" y="21" fontSize="10" fontFamily="Open Sans, sans-serif" fill="#fff" textLength="12">9+</text>
          </Icon>
        </TaskApp>
        <TaskApp $active>
          <FusionLogo size={23} />
        </TaskApp>
        <Tray>
          <Slot $w={24}><Icon w={13}><path d="M2 9.500L7.500 4 13 9.500" stroke="#fff" strokeWidth="1.300" /></Icon></Slot>
          <Slot $w={24}>
            <Icon w={18}>
              <path d="M1 4l15-2v13H1zM5 8a3.500 3.500 0 0 1 6-1V4.500M5 12l1-1c2 1 4 1 5-2" stroke="#fff" strokeWidth="1.300" />
              <circle cx="14" cy="13.500" r="4" fill="#ef9a2b" />
            </Icon>
          </Slot>
          <Slot $w={24}>
            <Icon w={17}><path d="M6 4h10v8H4V8M8 15h6M11 12v3M1 2h5v5H1zM3.500 7v7" stroke="#fff" /></Icon>
          </Slot>
          <Slot $w={17}>
            <Icon w={17}><path d="M1 6h2.500L7 3v11l-3.500-3H1zM9 6c1 2 1 3 0 5M11.500 4.500c2 3 2 5 0 8M14 3c3 3 3 8 0 11" stroke="#fff" strokeWidth="1.100" /></Icon>
          </Slot>
          <Lang>ESP</Lang>
          <Clock>
            18:52
            <br />
            16/7/2022
          </Clock>
          <Slot $w={36}>
            <Icon w={17}><path d="M1 2h15v11h-5l-2.500 3-2.500-3H1z" stroke="#fff" strokeWidth="1.200" /></Icon>
          </Slot>
        </Tray>
      </TaskBar>
    </Window>
  );
};

export default App;
